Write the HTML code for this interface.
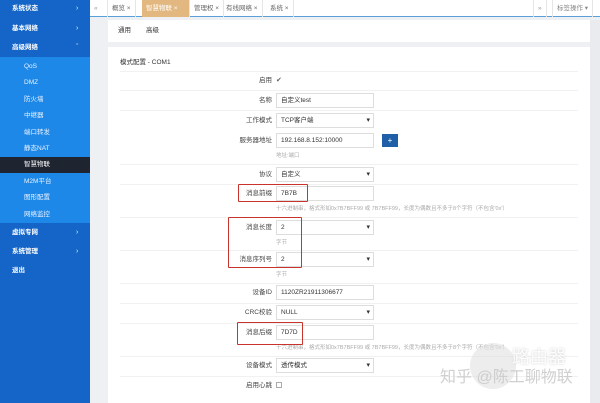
<!DOCTYPE html><html><head><meta charset="utf-8"><style>
*{margin:0;padding:0;box-sizing:border-box}
body{width:600px;height:403px;overflow:hidden;background:#eef0f3;font-family:"Liberation Sans","Noto Sans CJK SC",sans-serif;font-size:7px;line-height:9px;color:#333;position:relative}
div{line-height:9px}
.abs{position:absolute}
#sb{left:0;top:0;width:90px;height:403px;background:#1565c8}
.sub{left:0;top:57px;width:90px;height:166px;background:#1e88e8}
.it{position:absolute;color:#fff;font-size:6.5px;font-weight:bold}
.si{position:absolute;left:24px;color:#e8f2ff;font-size:6.5px}
.arr{position:absolute;left:76px;color:#cfe;font-size:7px}
#tb{left:90px;top:0;width:510px;height:17px;background:#fff;border-bottom:1px solid #5aa0d8}
.tab{position:absolute;top:0;height:17px;line-height:17px;font-size:6.5px;color:#666;border-right:1px solid #e5e5e5;padding:0 4px;white-space:nowrap}
.lbl{position:absolute;right:328px;font-size:6.5px;color:#444;text-align:right;white-space:nowrap;height:15px;line-height:15px}
.inp{position:absolute;left:276px;width:98px;height:15px;border:1px solid #ddd;background:#fff;font-size:6.5px;line-height:13px;padding-left:4px;color:#333}
.sel::after{content:"▾";position:absolute;right:3px;top:0;font-size:7px;color:#333}
.hr{position:absolute;left:120px;width:458px;height:1px;background:#f1f1f1}
.hint{position:absolute;left:276px;font-size:5.5px;color:#aaa;white-space:nowrap}
.red{position:absolute;border:1.5px solid #c8332c;border-radius:1px}
</style></head><body>
<div id="sb" class="abs"></div>
<div class="sub abs"></div>
<div class="abs" style="left:0;top:157px;width:90px;height:16px;background:#1f2530"></div>
<div class="it" style="left:12px;top:4px">系统状态</div><div class="arr" style="top:4px">›</div>
<div class="it" style="left:12px;top:24px">基本网络</div><div class="arr" style="top:24px">›</div>
<div class="it" style="left:12px;top:43px">高级网络</div><div class="arr" style="top:43px">ˇ</div>
<div class="si" style="top:62px">QoS</div>
<div class="si" style="top:78px">DMZ</div>
<div class="si" style="top:95px">防火墙</div>
<div class="si" style="top:111px">中继器</div>
<div class="si" style="top:128px">端口转发</div>
<div class="si" style="top:144px">静态NAT</div>
<div class="si" style="top:160px;color:#fff">智慧物联</div>
<div class="si" style="top:177px">M2M平台</div>
<div class="si" style="top:193px">图形配置</div>
<div class="si" style="top:210px">网络监控</div>
<div class="it" style="left:12px;top:228px">虚拟专网</div><div class="arr" style="top:228px">›</div>
<div class="it" style="left:12px;top:247px">系统管理</div><div class="arr" style="top:247px">›</div>
<div class="it" style="left:12px;top:266px">退出</div>

<div id="tb" class="abs">
<div class="tab" style="left:0;width:18px;color:#999">«</div>
<div class="tab" style="left:18px">概览 ×</div>
<div class="tab" style="left:52px;background:#e2b880;color:#fff;width:48px">智慧物联 ×</div>
<div class="tab" style="left:100px">管理权 ×</div>
<div class="tab" style="left:132px">有线网络 ×</div>
<div class="tab" style="left:176px">系统 ×</div>
<div class="tab" style="left:443px;border-left:1px solid #e5e5e5;color:#999">»</div>
<div class="tab" style="left:462px;border-left:1px solid #e5e5e5;color:#888">标签操作 ▾</div>
</div>
<div class="abs" style="left:108px;top:20px;width:482px;height:22px;background:#fff"></div>
<div class="abs" style="left:118px;top:26px;font-size:6.5px">通用</div>
<div class="abs" style="left:146px;top:26px;font-size:6.5px">高级</div>
<div class="abs" style="left:108px;top:47px;width:482px;height:356px;background:#fff"></div>
<div class="abs" style="left:590px;top:20px;width:10px;height:383px;background:#e9ebee"></div>
<div class="abs" style="left:120px;top:58px;font-size:6.5px">模式配置 - COM1</div>

<div class="hr" style="top:71px"></div>
<div class="lbl" style="top:73px">启用</div><div class="abs" style="left:276px;top:76px;font-size:7px;color:#666">✔</div>
<div class="hr" style="top:90px"></div>
<div class="lbl" style="top:93px">名称</div><div class="inp" style="top:93px">自定义test</div>
<div class="hr" style="top:110px"></div>
<div class="lbl" style="top:113px">工作模式</div><div class="inp sel" style="top:113px">TCP客户端</div>
<div class="lbl" style="top:133px">服务器地址</div><div class="inp" style="top:133px">192.168.8.152:10000</div>
<div class="abs" style="left:382px;top:134px;width:16px;height:13px;background:#1f5fa8;color:#fff;text-align:center;line-height:13px;font-size:8px">+</div>
<div class="hint" style="top:152px">地址:端口</div>
<div class="hr" style="top:164px"></div>
<div class="lbl" style="top:167px">协议</div><div class="inp sel" style="top:167px">自定义</div>
<div class="hr" style="top:184px"></div>
<div class="lbl" style="top:186px">消息前缀</div><div class="inp" style="top:186px">7B7B</div>
<div class="hint" style="top:205px">十六进制串，格式形如0x7B7BFF99 或 7B7BFF99，长度为偶数且不多于8个字符（不包含'0x'）</div>
<div class="hr" style="top:217px"></div>
<div class="lbl" style="top:220px">消息长度</div><div class="inp sel" style="top:220px">2</div>
<div class="hint" style="top:239px">字节</div>
<div class="hr" style="top:250px"></div>
<div class="lbl" style="top:252px">消息序列号</div><div class="inp sel" style="top:252px">2</div>
<div class="hint" style="top:271px">字节</div>
<div class="hr" style="top:283px"></div>
<div class="lbl" style="top:285px">设备ID</div><div class="inp" style="top:285px">1120ZR21911306677</div>
<div class="hr" style="top:303px"></div>
<div class="lbl" style="top:305px">CRC校验</div><div class="inp sel" style="top:305px">NULL</div>
<div class="hr" style="top:323px"></div>
<div class="lbl" style="top:325px">消息后缀</div><div class="inp" style="top:325px">7D7D</div>
<div class="hint" style="top:344px">十六进制串，格式形如0x7B7BFF99 或 7B7BFF99，长度为偶数且不多于8个字符（不包含'0x'）</div>
<div class="hr" style="top:356px"></div>
<div class="lbl" style="top:358px">设备模式</div><div class="inp sel" style="top:358px">透传模式</div>
<div class="hr" style="top:376px"></div>
<div class="lbl" style="top:378px">启用心跳</div><div class="abs" style="left:276px;top:382px;width:6px;height:6px;border:1px solid #aaa"></div>

<div class="red" style="left:238px;top:184px;width:70px;height:18px"></div>
<div class="red" style="left:228px;top:217px;width:74px;height:51px"></div>
<div class="red" style="left:237px;top:322px;width:66px;height:23px"></div>

<div class="abs" style="left:470px;top:343px;width:46px;height:46px;border-radius:50%;background:rgba(225,225,225,.6)"></div>
<div class="abs" style="left:512px;top:346px;font-size:18px;line-height:22px;color:rgba(255,255,255,.9);text-shadow:0 0 2px #ccc">路由器</div>
<div class="abs" style="left:440px;top:368px;font-size:16px;line-height:20px;color:rgba(200,200,200,.85);white-space:nowrap">知乎 @陈工聊物联</div>
</body></html>
